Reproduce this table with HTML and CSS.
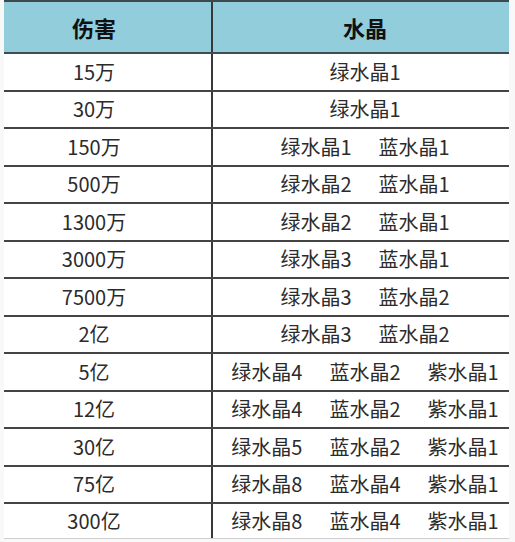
FILE: index.html
```html
<!DOCTYPE html>
<html lang="zh">
<head>
<meta charset="utf-8">
<link rel="stylesheet" href="styles.css">
</head>
<body>
<div class="sheet">
  <div class="row head"><div class="c1">伤害</div><div class="c2">水晶</div></div>
  <div class="row"><div class="c1">15万</div><div class="c2"><span>绿水晶1</span></div></div>
  <div class="row"><div class="c1">30万</div><div class="c2"><span>绿水晶1</span></div></div>
  <div class="row"><div class="c1">150万</div><div class="c2"><span>绿水晶1</span><span>蓝水晶1</span></div></div>
  <div class="row"><div class="c1">500万</div><div class="c2"><span>绿水晶2</span><span>蓝水晶1</span></div></div>
  <div class="row"><div class="c1">1300万</div><div class="c2"><span>绿水晶2</span><span>蓝水晶1</span></div></div>
  <div class="row"><div class="c1">3000万</div><div class="c2"><span>绿水晶3</span><span>蓝水晶1</span></div></div>
  <div class="row"><div class="c1">7500万</div><div class="c2"><span>绿水晶3</span><span>蓝水晶2</span></div></div>
  <div class="row"><div class="c1">2亿</div><div class="c2"><span>绿水晶3</span><span>蓝水晶2</span></div></div>
  <div class="row"><div class="c1">5亿</div><div class="c2"><span>绿水晶4</span><span>蓝水晶2</span><span>紫水晶1</span></div></div>
  <div class="row"><div class="c1">12亿</div><div class="c2"><span>绿水晶4</span><span>蓝水晶2</span><span>紫水晶1</span></div></div>
  <div class="row"><div class="c1">30亿</div><div class="c2"><span>绿水晶5</span><span>蓝水晶2</span><span>紫水晶1</span></div></div>
  <div class="row"><div class="c1">75亿</div><div class="c2"><span>绿水晶8</span><span>蓝水晶4</span><span>紫水晶1</span></div></div>
  <div class="row last"><div class="c1">300亿</div><div class="c2"><span>绿水晶8</span><span>蓝水晶4</span><span>紫水晶1</span></div></div>
</div>
</body>
</html>
```
FILE: styles.css
```css
html, body {
  margin: 0;
  padding: 0;
  background: #f8f8f8;
}
body {
  font-family: "Noto Sans CJK SC", "Liberation Sans", sans-serif;
  color: #2b2b2b;
  font-size: 20px;
}
.sheet {
  margin-left: 4px;
  width: 505px;
  background: #ffffff;
  border-top: 2px solid #3c4a4e;
}
.row {
  display: grid;
  grid-template-columns: 209px 296px;
  height: 35.5px;
  border-bottom: 2px solid #444444;
}
.row.head {
  height: 50px;
  background: #92cddc;
  font-weight: bold;
  font-size: 22px;
  color: #111;
  border-bottom-color: #3f4d51;
}
.row.last {
  height: 34px;
  border-bottom: 1px solid #cfcfcf;
}
.c1, .c2 {
  display: flex;
  align-items: center;
  justify-content: center;
  line-height: 1;
}
.c1 {
  border-right: 2px solid #383838;
  padding-right: 27px;
}
.c2 {
  padding-left: 8px;
  gap: 27px;
}
```
